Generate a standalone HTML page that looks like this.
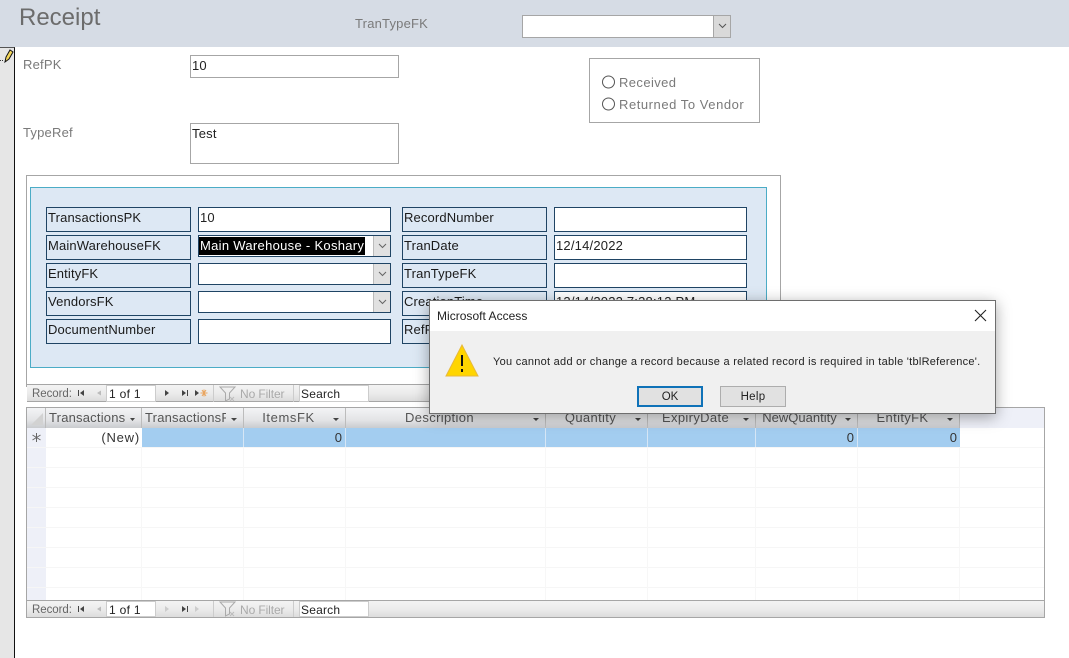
<!DOCTYPE html>
<html><head><meta charset="utf-8"><style>
html,body{margin:0;padding:0;background:#fff}
#p{position:relative;width:1069px;height:658px;overflow:hidden;background:#fff;font-family:"Liberation Sans",sans-serif;font-size:13px;color:#222}
#p div,#p svg{position:absolute;box-sizing:border-box;white-space:nowrap}
.g{color:#7a7a7a;letter-spacing:.2px}
.b{background:#fff;border:1px solid #a6a6a6;padding:2px 0 0 1px;line-height:15px;letter-spacing:.2px}
.l{background:#dde8f4;border:1px solid #1f4464;left:46px;width:145px;height:25px;padding:2px 0 0 1px;line-height:16px;color:#1a1a1a;letter-spacing:.14px}
.f{background:#fff;border:1px solid #1f4464;left:198px;width:193px;height:25px;padding:2px 0 0 1px;line-height:16px;letter-spacing:.2px}
.r{left:402px}.s{left:554px}
.cb{background:#e1e1e1;border-left:1px solid #bbb;top:0;right:0;width:17px;bottom:0}
.cb svg{left:4px;top:7px}
.h{top:408px;height:20px;background:linear-gradient(#f3f4f6,#e3e4e6 60%,#c9cbce);border-right:1px solid #bcbcbc;font-size:13px;line-height:20px;color:#555;letter-spacing:.35px;text-align:center;padding-right:12px;overflow:hidden}
.c{top:428px;height:19px;background:#a3cdf0;border-right:1px solid #d6e6f5;text-align:right;line-height:20px;padding-right:3px;color:#333}
.v{top:447px;height:153px;width:1px;background:#f7f7f7}
.o{left:27px;width:1017px;height:1px;background:#f6f6f6}
.nav{left:27px;height:17px;background:linear-gradient(#f3f3f3,#ececec 50%,#dcdcdc);font-size:12px;color:#666}
.nav div{line-height:16px}
</style></head><body><div id="p">

<div style="left:0;top:0;width:1069px;height:47px;background:#d6dce5"></div>
<div style="left:19px;top:3px;font-size:24px;line-height:30px;color:#6c6c6c">Receipt</div>
<div class="g" style="left:355px;top:16px;line-height:16px">TranTypeFK</div>
<div style="left:522px;top:15px;width:209px;height:23px;background:#fff;border:1px solid #a6a6a6"><div class="cb" style="background:#d9d9d9;border-left:1px solid #a6a6a6"><svg width="9" height="6" viewBox="0 0 9 6"><path d="M1 1l3.500 3.500L8 1" fill="none" stroke="#555"/></svg></div></div>

<div style="left:0;top:47px;width:15px;height:611px;background:#e6e6e6;border-right:1px solid #111;border-top:1px solid #555"></div>
<svg style="left:0;top:47px" width="14" height="17" viewBox="0 0 14 17"><path d="M0 13.500h1M2 13.500h1" stroke="#333"/><path d="M5 15l1-5 4-7 3 2-4 7z" fill="#f3d65a" stroke="#111"/></svg>

<div class="g" style="left:23px;top:57px;line-height:16px">RefPK</div>
<div class="b" style="left:190px;top:55px;width:209px;height:23px">10</div>
<div class="g" style="left:23px;top:125px;line-height:16px">TypeRef</div>
<div class="b" style="left:190px;top:123px;width:209px;height:41px">Test</div>

<div style="left:589px;top:58px;width:171px;height:65px;border:1px solid #a6a6a6"></div>
<svg style="left:601px;top:75px" width="15" height="36" viewBox="0 0 15 36"><circle cx="7.500" cy="7" r="6" fill="#fff" stroke="#555"/><circle cx="7.500" cy="29" r="6" fill="#fff" stroke="#555"/></svg>
<div class="g" style="left:619px;top:75px;line-height:16px;letter-spacing:.4px">Received</div>
<div class="g" style="left:619px;top:97px;line-height:16px;letter-spacing:.55px">Returned To Vendor</div>

<div style="left:26px;top:175px;width:755px;height:212px;border:1px solid #a6a6a6;border-bottom:0"></div>
<div style="left:30px;top:187px;width:737px;height:181px;background:#dde8f4;border:1px solid #4bacc6"></div>

<div class="l" style="top:207px">TransactionsPK</div>
<div class="f" style="top:207px">10</div>
<div class="l" style="top:235px">MainWarehouseFK</div>
<div class="f" style="top:235px;height:22px;padding:0"><div style="left:0;top:1px;width:166px;height:18px;background:#000;color:#fff;line-height:17px;letter-spacing:.3px;padding-left:1px">Main Warehouse - Koshary</div><div class="cb"><svg width="9" height="6" viewBox="0 0 9 6"><path d="M1 1l3.500 3.500L8 1" fill="none" stroke="#666"/></svg></div></div>
<div class="l" style="top:263px">EntityFK</div>
<div class="f" style="top:263px;height:22px"><div class="cb"><svg width="9" height="6" viewBox="0 0 9 6"><path d="M1 1l3.500 3.500L8 1" fill="none" stroke="#666"/></svg></div></div>
<div class="l" style="top:291px">VendorsFK</div>
<div class="f" style="top:291px;height:22px"><div class="cb"><svg width="9" height="6" viewBox="0 0 9 6"><path d="M1 1l3.500 3.500L8 1" fill="none" stroke="#666"/></svg></div></div>
<div class="l" style="top:319px">DocumentNumber</div>
<div class="f" style="top:319px"></div>

<div class="l r" style="top:207px">RecordNumber</div>
<div class="f s" style="top:207px"></div>
<div class="l r" style="top:235px">TranDate</div>
<div class="f s" style="top:235px">12/14/2022</div>
<div class="l r" style="top:263px">TranTypeFK</div>
<div class="f s" style="top:263px"></div>
<div class="l r" style="top:291px">CreationTime</div>
<div class="f s" style="top:291px">12/14/2022 7:28:12 PM</div>
<div class="l r" style="top:319px">RefFK</div>
<div class="f s" style="top:319px"></div>

<!-- top nav -->
<div style="left:26px;top:384px;width:755px;height:1px;background:#a6a6a6"></div>
<div class="nav" style="top:385px;width:754px;height:17px;border-bottom:1px solid #a6a6a6">
 <div style="left:5px;top:1px;font-size:11.500px;letter-spacing:-.05px">Record:</div>
 <svg style="left:50px;top:4px" width="60" height="9" viewBox="0 0 60 9"><path d="M1.500 1v6" stroke="#444"/><path d="M7 1v6L3 4z" fill="#444"/><path d="M24 1.500v5L20 4z" fill="#bbb"/></svg>
 <div style="left:79px;top:0;width:50px;height:17px;background:#fff;border:1px solid #ccc;padding-left:2px;color:#222;letter-spacing:.3px">1 of 1</div>
 <svg style="left:137px;top:4px" width="50" height="9" viewBox="0 0 50 9"><path d="M1 1v6l4-3zM18 1v6l4-3zM31 1v6l4-3z" fill="#444"/><path d="M23.500 1v6" stroke="#444"/><path d="M38 1l4 6M42 1l-4 6M36.500 4h7M40 .500v7" stroke="#e9a55f"/></svg>
 <svg style="left:192px;top:1px" width="18" height="16" viewBox="0 0 18 16"><path d="M1 1h15l-5.500 6v6l-4 2V7z" fill="none" stroke="#aaa"/><path d="M11 11l4 4M15 11l-4 4" stroke="#bbb"/></svg>
 <div style="left:213px;top:1px;color:#aaa;letter-spacing:-.1px">No Filter</div>
 <div style="left:186px;top:0;width:1px;height:17px;background:#ccc"></div>
 <div style="left:266px;top:0;width:1px;height:17px;background:#ccc"></div>
 <div style="left:272px;top:0;width:70px;height:17px;background:#fff;border:1px solid #ccc;padding-left:1px;color:#222;letter-spacing:.2px">Search</div>
</div>

<!-- datasheet -->
<div style="left:26px;top:407px;width:1019px;height:211px;border:1px solid #a6a6a6;background:#fff"></div>
<div style="left:27px;top:408px;width:19px;height:192px;background:#eef0f8"></div>
<div class="h" style="left:27px;width:19px;padding:0"></div>
<svg style="left:30px;top:412px" width="14" height="14" viewBox="0 0 14 14"><path d="M1 13L13 1v12z" fill="#d2d2d2"/></svg>
<div class="h" style="left:46px;width:96px;text-align:left;padding:0 0 0 3px"><span style="display:block;width:76px;overflow:hidden;letter-spacing:.2px">Transactions</span></div>
<div class="h" style="left:142px;width:102px;text-align:left;padding:0 0 0 3px"><span style="display:block;width:81px;overflow:hidden;letter-spacing:.2px">TransactionsF</span></div>
<div class="h" style="left:244px;width:102px;letter-spacing:.6px">ItemsFK</div>
<div class="h" style="left:346px;width:200px">Description</div>
<div class="h" style="left:546px;width:102px">Quantity</div>
<div class="h" style="left:648px;width:108px">ExpiryDate</div>
<div class="h" style="left:756px;width:102px;padding-right:14px;letter-spacing:0">NewQuantity</div>
<div class="h" style="left:858px;width:102px">EntityFK</div>
<div style="left:960px;top:408px;width:84px;height:20px;background:#eef0f8"></div>
<svg style="left:0;top:408px" width="960" height="20" viewBox="0 0 960 20"><g fill="#444"><path d="M130 10h5l-2.500 3zM231 10h6l-3 3zM333 10h6l-3 3zM533 10h6l-3 3zM635 10h6l-3 3zM743 10h6l-3 3zM845 10h6l-3 3zM947 10h6l-3 3z"/></g></svg>

<svg style="left:31px;top:432px" width="11" height="11" viewBox="0 0 11 11"><path d="M5.500 1v9M1.500 3l8 5M9.500 3l-8 5" stroke="#666"/></svg>
<div style="left:46px;top:428px;width:96px;height:19px;background:#fff;text-align:right;line-height:20px;padding-right:2px;letter-spacing:.8px;color:#333">(New)</div>
<div class="c" style="left:142px;width:102px"></div>
<div class="c" style="left:244px;width:102px">0</div>
<div class="c" style="left:346px;width:200px"></div>
<div class="c" style="left:546px;width:102px"></div>
<div class="c" style="left:648px;width:108px"></div>
<div class="c" style="left:756px;width:102px">0</div>
<div class="c" style="left:858px;width:102px;border-right:0">0</div>
<div class="o" style="top:447px"></div><div class="o" style="top:467px"></div><div class="o" style="top:487px"></div><div class="o" style="top:507px"></div><div class="o" style="top:527px"></div><div class="o" style="top:547px"></div><div class="o" style="top:567px"></div><div class="o" style="top:587px"></div>
<div class="v" style="left:141px"></div><div class="v" style="left:243px"></div><div class="v" style="left:345px"></div><div class="v" style="left:545px"></div><div class="v" style="left:647px"></div><div class="v" style="left:755px"></div><div class="v" style="left:857px"></div><div class="v" style="left:959px"></div>

<!-- bottom nav -->
<div class="nav" style="top:600px;width:1017px;border-top:1px solid #a6a6a6">
 <div style="left:5px;top:1px;font-size:11.500px;letter-spacing:-.05px">Record:</div>
 <svg style="left:50px;top:4px" width="60" height="9" viewBox="0 0 60 9"><path d="M1.500 1v6" stroke="#444"/><path d="M7 1v6L3 4z" fill="#444"/><path d="M24 1.500v5L20 4z" fill="#bbb"/></svg>
 <div style="left:79px;top:0;width:50px;height:16px;background:#fff;border:1px solid #ccc;padding-left:2px;color:#222;letter-spacing:.3px">1 of 1</div>
 <svg style="left:137px;top:4px" width="50" height="9" viewBox="0 0 50 9"><path d="M1 1v6l4-3zM31 1v6l4-3z" fill="#ccc"/><path d="M18 1v6l4-3z" fill="#444"/><path d="M23.500 1v6" stroke="#444"/></svg>
 <svg style="left:192px;top:0" width="18" height="16" viewBox="0 0 18 16"><path d="M1 1h15l-5.500 6v6l-4 2V7z" fill="none" stroke="#aaa"/><path d="M11 11l4 4M15 11l-4 4" stroke="#bbb"/></svg>
 <div style="left:213px;top:1px;color:#aaa;letter-spacing:-.1px">No Filter</div>
 <div style="left:266px;top:0;width:1px;height:16px;background:#ccc"></div>
 <div style="left:186px;top:0;width:1px;height:16px;background:#ccc"></div>
 <div style="left:272px;top:0;width:70px;height:16px;background:#fff;border:1px solid #ccc;padding-left:1px;color:#222;letter-spacing:.2px">Search</div>
</div>

<!-- dialog -->
<div style="left:429px;top:300px;width:567px;height:114px;background:#f0f0f0;border:1px solid #6e6e6e;box-shadow:0 3px 14px rgba(0,0,0,.35)">
 <div style="left:0;top:0;width:565px;height:30px;background:#fff"></div>
 <div style="left:7px;top:7px;font-size:12px;line-height:16px;color:#222;letter-spacing:.02px">Microsoft Access</div>
 <svg style="left:544px;top:8px" width="13" height="13" viewBox="0 0 13 13"><path d="M1 1l11 11M12 1L1 12" stroke="#222" stroke-width="1.100"/></svg>
 <svg style="left:15px;top:42px" width="34" height="34" viewBox="0 0 34 34"><path d="M17 2L33 33H1z" fill="#ffd500" stroke="#e8b93a"/><path d="M16 12h2v11h-2zM16 26h2v3h-2z" fill="#111"/></svg>
 <div style="left:63px;top:53px;font-size:11px;line-height:16px;color:#222;letter-spacing:.27px">You cannot add or change a record because a related record is required in table 'tblReference'.</div>
 <div style="left:207px;top:85px;width:66px;height:21px;background:#e1e1e1;border:2px solid #0f72b8;text-align:center;font-size:11.500px;line-height:18px">OK</div>
 <div style="left:290px;top:85px;width:66px;height:21px;background:#e1e1e1;border:1px solid #adadad;text-align:center;font-size:11.500px;line-height:20px;letter-spacing:.3px">Help</div>
</div>

</div></body></html>
